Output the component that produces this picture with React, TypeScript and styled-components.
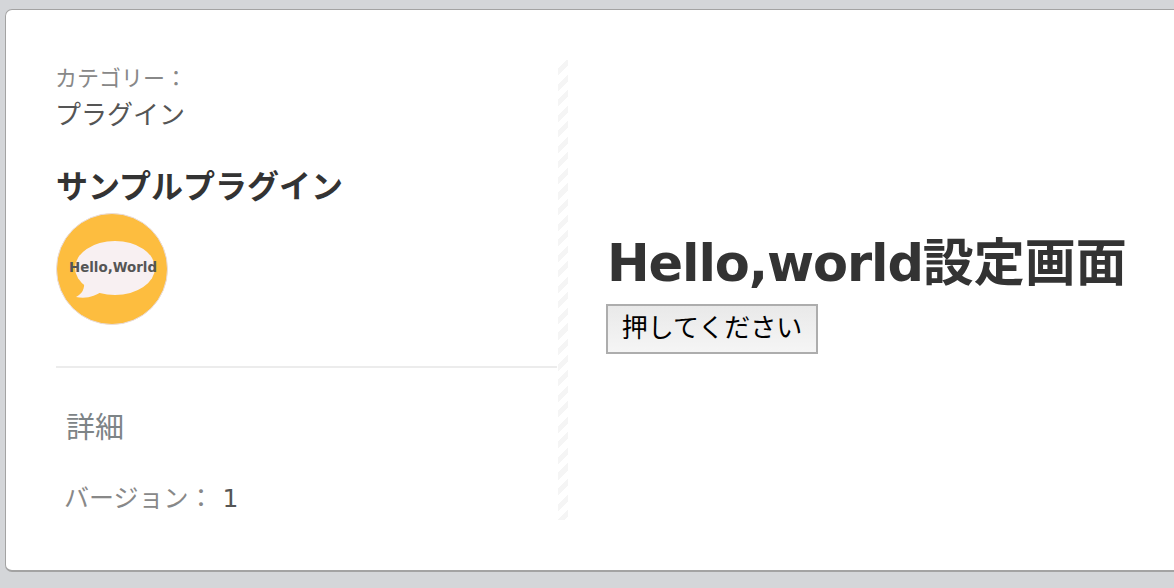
import React from 'react';
import styled, { createGlobalStyle } from 'styled-components';

const GlobalStyle = createGlobalStyle`
    html, body {
        background: #d4d6d9;
        height: 588px;
        margin: 0;
        overflow: hidden;
    }

    body {
        font-family: "DejaVu Sans", "Noto Sans CJK JP", sans-serif;
    }
`;

const Page = styled.div`
    overflow: hidden;
    padding: 9px 0 0 5px;
`;

const Card = styled.div`
    background: #fff;
    border: 1px solid #a3a3a3;
    border-bottom-width: 2px;
    border-radius: 7px;
    box-sizing: border-box;
    display: flex;
    height: 563px;
    margin-right: -20px;
    padding: 50px 0 0 50px;
`;

const Sidebar = styled.aside`
    box-sizing: border-box;
    flex: none;
    height: 460px;
    padding-right: 12px;
    position: relative;
    width: 513px;

    &::after {
        background: repeating-linear-gradient(135deg, #fff 0, #fff 6px, #f5f5f5 6px, #f5f5f5 11px);
        bottom: 0;
        content: '';
        position: absolute;
        right: 1px;
        top: 0;
        width: 10px;
    }
`;

const Summary = styled.div`
    border-bottom: 2px solid #ececec;
    height: 306px;
`;

const Caption = styled.div`
    color: #888;
    font-family: "Noto Sans CJK JP", sans-serif;
    font-size: 22px;
    line-height: 32px;
    margin-left: -1px;
`;

const Category = styled.div`
    color: #555;
    font-size: 26px;
    line-height: 38px;
    margin-left: -1px;
    padding-top: 4px;
`;

const PluginName = styled.h2`
    color: #333;
    font-size: 32px;
    font-weight: 700;
    line-height: 40px;
    margin: 33px 0 6px;
`;

const Logo = styled.svg`
    display: block;
    height: 112px;
    width: 112px;
`;

const Details = styled.div`
    padding-left: 8px;
`;

const DetailsTitle = styled.div`
    color: #7d8487;
    font-size: 29px;
    line-height: 40px;
    margin-top: 40px;
    padding-left: 2px;
`;

const Version = styled.div`
    color: #888;
    font-family: "Noto Sans CJK JP", sans-serif;
    font-size: 25px;
    line-height: 40px;
    margin-top: 28px;

    span {
        color: #555;
        font-family: "DejaVu Sans", sans-serif;
        margin-left: 9px;
    }
`;

const Main = styled.main`
    padding: 173px 0 0 38px;
`;

const Title = styled.h1`
    color: #333;
    font-size: 51px;
    font-weight: 700;
    line-height: 62px;
    margin: 0 0 9px;
    white-space: nowrap;

    span {
        letter-spacing: -1.1px;
    }
`;

const PushButton = styled.button`
    background: linear-gradient(#e9e9e9, #f5f5f5);
    border: 2px solid #adadad;
    box-sizing: border-box;
    color: #000;
    display: block;
    font-family: inherit;
    font-size: 26px;
    height: 50px;
    line-height: 40px;
    margin-left: -1px;
    padding: 0 0 3px;
    width: 212px;
`;

const App = () => (
    <React.Fragment>
        <GlobalStyle />
        <Page>
            <Card>
                <Sidebar>
                    <Summary>
                        <Caption>カテゴリー：</Caption>
                        <Category>プラグイン</Category>
                        <PluginName>サンプルプラグイン</PluginName>
                        <Logo viewBox='0 0 112 112'>
                            <circle cx='56' cy='56' r='55.5' fill='#fdbd3f' stroke='#e8dcdc' strokeWidth='1' />
                            <ellipse cx='59' cy='55' rx='40' ry='27' fill='#f8f0f2' />
                            <path d='M28 68 C29 76 26 81 20 84 C31 86 40 83 46 78 Z' fill='#f8f0f2' />
                            <text x='57' y='59' textAnchor='middle' fontSize='13.4' fontWeight='700' fill='#555'>Hello,World</text>
                        </Logo>
                    </Summary>
                    <Details>
                        <DetailsTitle>詳細</DetailsTitle>
                        <Version>バージョン：<span>1</span></Version>
                    </Details>
                </Sidebar>
                <Main>
                    <Title><span>Hello,world</span>設定画面</Title>
                    <PushButton>押してください</PushButton>
                </Main>
            </Card>
        </Page>
    </React.Fragment>
);

export default App;
